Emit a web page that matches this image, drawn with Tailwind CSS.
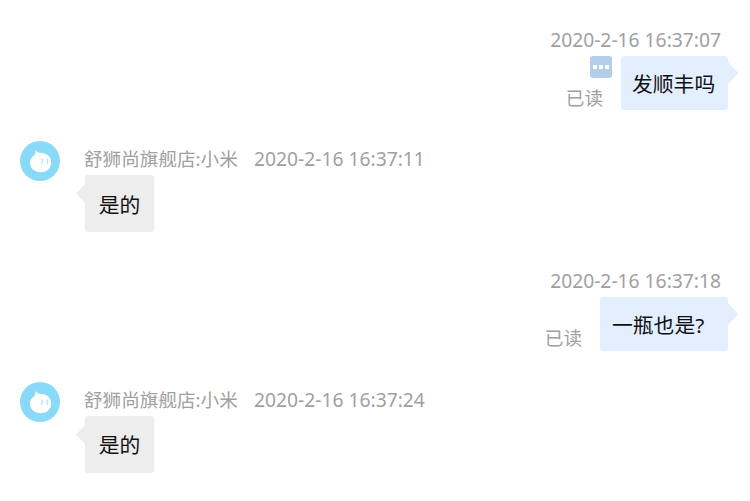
<!DOCTYPE html>
<html lang="zh-CN">
<head>
  <meta charset="UTF-8">
  <meta name="viewport" content="width=device-width, initial-scale=1.0">
  <title>聊天记录</title>
  <script src="https://cdn.jsdelivr.net/npm/@tailwindcss/browser@4"></script>
</head>
<body class="bg-white overflow-hidden font-['Noto_Sans','Noto_Sans_CJK_SC',sans-serif] text-[#a0a0a0]">
  <svg class="hidden">
    <symbol id="avatar" viewBox="0 0 40 40">
      <circle cx="20" cy="20" r="20" fill="#89d9f8"/>
      <path d="M15 9C16.6 10.8 18.4 11.8 21.4 12C27.4 12.2 31.2 16.2 31.2 21.4C31.2 27.2 26.7 31.2 20.7 31.2C14.5 31.2 9.9 27.2 9.9 21.6C9.9 18 12 15.8 14.2 14.2C15.6 13 15.5 11 15 9Z" fill="#fff"/>
      <path d="M20.9 18.2h1.4v4h-1.4M26.3 18.2h1.4v4h-1.4" fill="none" stroke="#a3e1f9" stroke-width="1"/>
    </symbol>
  </svg>

  <main class="flex flex-col h-[501px]">
    <!-- Enviado 1 -->
    <section class="flex flex-col items-end pt-7 pr-[22px]">
      <time class="h-7 pr-[7px] text-[19.25px] leading-[24px] whitespace-nowrap">2020-2-16 16:37:07</time>
      <div class="flex">
        <div class="flex flex-col items-end w-[60px] mr-[9px]">
          <div class="flex items-center justify-center gap-[2px] w-[22px] h-[22px] rounded-[3px] bg-[#b4cde8]">
            <i class="w-1 h-1 bg-white"></i>
            <i class="w-1 h-1 bg-white"></i>
            <i class="w-1 h-1 bg-white"></i>
          </div>
          <span class="mt-[7px] mr-[9px] text-[18.6px] leading-[26px]">已读</span>
        </div>
        <div class="relative flex items-center w-[107px] h-[54px] pt-[3px] pl-[11px] rounded-[3px] bg-[#e3efff] text-[20.8px] leading-none text-[#111] whitespace-nowrap">
          发顺丰吗
          <svg class="absolute left-full top-[6px]" width="11" height="22"><path d="M0 0L10.5 11L0 22Z" fill="#e3efff"/></svg>
        </div>
      </div>
    </section>

    <!-- Recibido 1 -->
    <section class="flex pt-[31px] pl-5 -mt-px">
      <svg class="w-10 h-10"><use href="#avatar"/></svg>
      <div class="ml-[25px]">
        <div class="flex h-[34px] text-[18.6px] leading-[36px] whitespace-nowrap">
          <span class="w-[170px] -ml-px">舒狮尚旗舰店:小米</span>
          <time class="text-[19.25px]">2020-2-16 16:37:11</time>
        </div>
        <div class="relative flex items-center justify-center w-[69px] h-[57px] pt-[3px] rounded-[3px] bg-[#ededed] text-[20.8px] leading-none text-[#111]">
          是的
          <svg class="absolute right-full top-[9px]" width="9" height="19"><path d="M9 0L0 9.5L9 19Z" fill="#ededed"/></svg>
        </div>
      </div>
    </section>

    <!-- Enviado 2 -->
    <section class="flex flex-col items-end pt-9 pr-[22px]">
      <time class="h-[29px] pr-[7px] text-[19.25px] leading-[26px] whitespace-nowrap">2020-2-16 16:37:18</time>
      <div class="flex">
        <span class="mt-7 mr-[18px] text-[18.6px] leading-[26px]">已读</span>
        <div class="relative flex items-center w-[128px] h-[54px] pt-[2px] pl-3 rounded-[3px] bg-[#e3efff] text-[20.8px] leading-none text-[#111] whitespace-nowrap">
          一瓶也是?
          <svg class="absolute left-full top-[6px]" width="11" height="22"><path d="M0 0L10.5 11L0 22Z" fill="#e3efff"/></svg>
        </div>
      </div>
    </section>

    <!-- Recibido 2 -->
    <section class="flex pt-[30.5px] pl-5">
      <svg class="w-10 h-10"><use href="#avatar"/></svg>
      <div class="ml-[25px]">
        <div class="flex h-[34px] text-[18.6px] leading-[36px] whitespace-nowrap">
          <span class="w-[170px] -ml-px">舒狮尚旗舰店:小米</span>
          <time class="text-[19.25px]">2020-2-16 16:37:24</time>
        </div>
        <div class="relative flex items-center justify-center w-[69px] h-[57px] pt-[3px] rounded-[3px] bg-[#ededed] text-[20.8px] leading-none text-[#111]">
          是的
          <svg class="absolute right-full top-[9px]" width="9" height="19"><path d="M9 0L0 9.5L9 19Z" fill="#ededed"/></svg>
        </div>
      </div>
    </section>
  </main>
</body>
</html>
